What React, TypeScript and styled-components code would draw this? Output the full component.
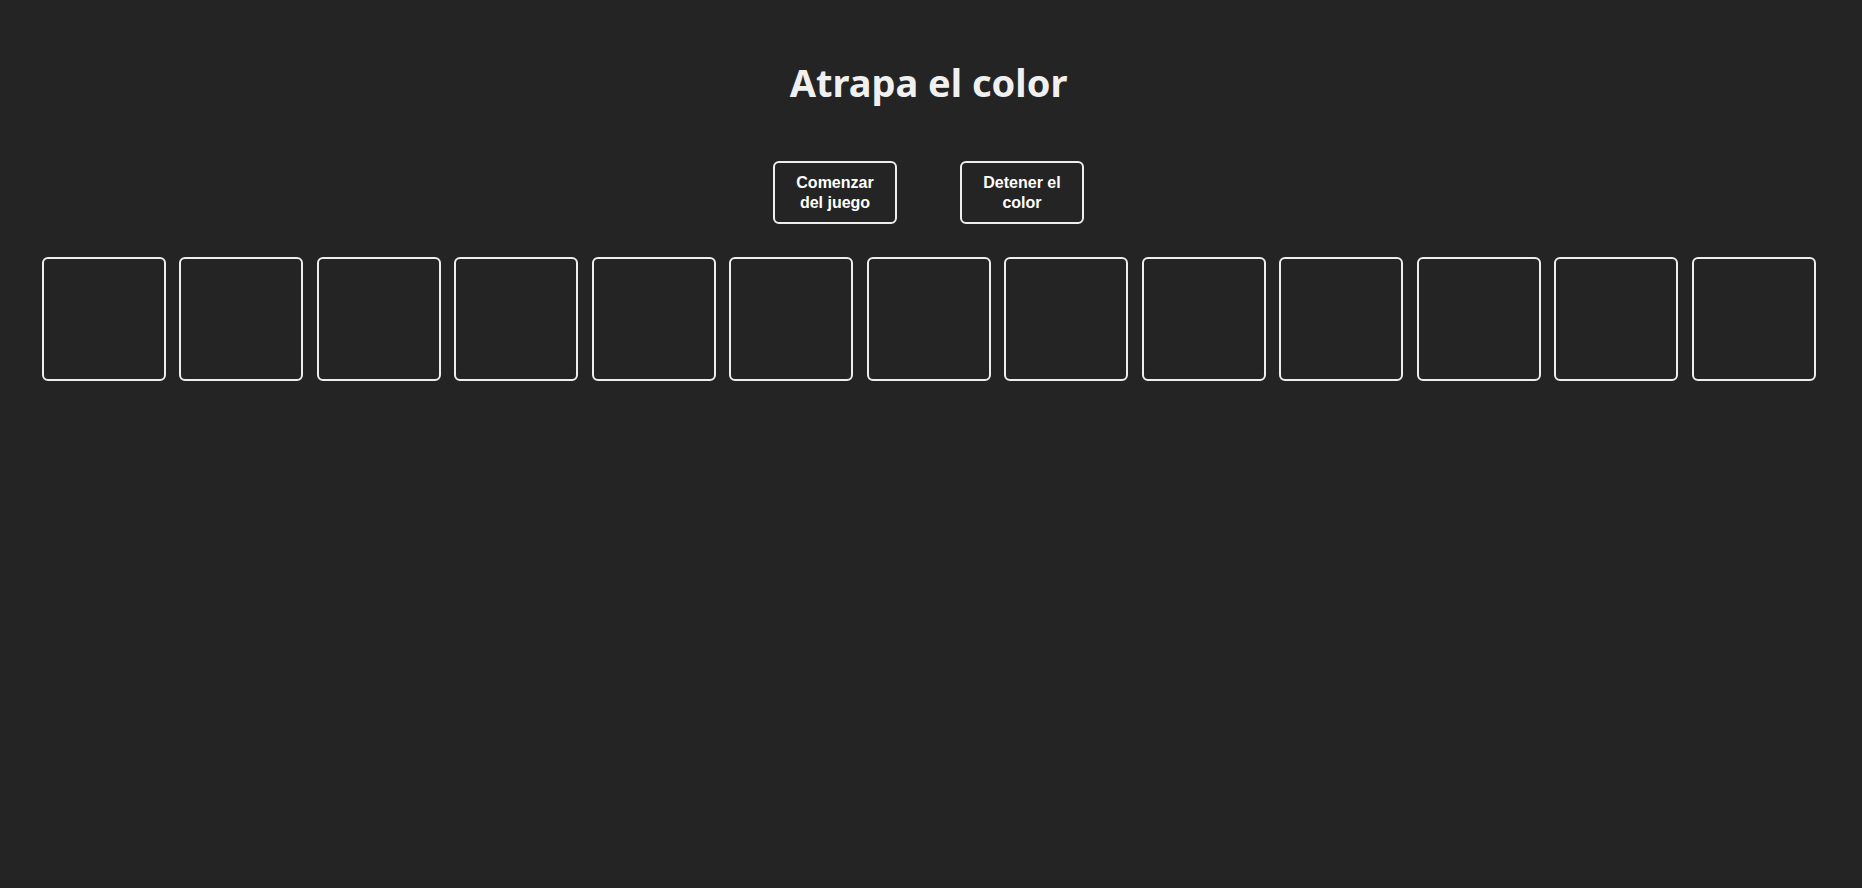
import React from "react";
import styled, { createGlobalStyle } from "styled-components";

const GlobalStyle = createGlobalStyle`
  html, body {
    margin: 0;
    padding: 0;
    background: #242424;
  }
  body {
    font-family: "Liberation Sans", Arial, sans-serif;
    color: #eeeeee;
  }
`;

const Page = styled.main`
  min-height: 888px;
  display: flex;
  flex-direction: column;
  align-items: center;
  padding: 56px 5px 0 0;
  box-sizing: border-box;
`;

const Title = styled.h1`
  margin: 0;
  font-family: "Noto Sans", "Open Sans", sans-serif;
  font-size: 38px;
  font-weight: 700;
  line-height: 52px;
  color: #f0f0f0;
`;

const Controls = styled.div`
  display: flex;
  gap: 63px;
  margin-top: 53px;
`;

const Button = styled.button`
  width: 124px;
  height: 63px;
  box-sizing: border-box;
  padding: 8px 12px;
  border: 2px solid #eeeeee;
  border-radius: 6px;
  background: transparent;
  color: #ffffff;
  font-family: "Liberation Sans", Arial, sans-serif;
  font-size: 16px;
  font-weight: 700;
  line-height: 20px;
  text-align: center;
  cursor: pointer;
`;

const Board = styled.div`
  display: flex;
  gap: 13.5px;
  margin-top: 33px;
`;

const Cell = styled.div<{ $color?: string }>`
  width: 124px;
  height: 124px;
  box-sizing: border-box;
  border: 2px solid #eeeeee;
  border-radius: 6px;
  background: ${(p) => p.$color ?? "transparent"};
`;

const cells = Array.from({ length: 13 }, (_, i) => i);

const App: React.FC = () => {
  return (
    <>
      <GlobalStyle />
      <Page>
        <Title>Atrapa el color</Title>
        <Controls>
          <Button>Comenzar del juego</Button>
          <Button>Detener el color</Button>
        </Controls>
        <Board>
          {cells.map((i) => (
            <Cell key={i} />
          ))}
        </Board>
      </Page>
    </>
  );
};

export default App;
